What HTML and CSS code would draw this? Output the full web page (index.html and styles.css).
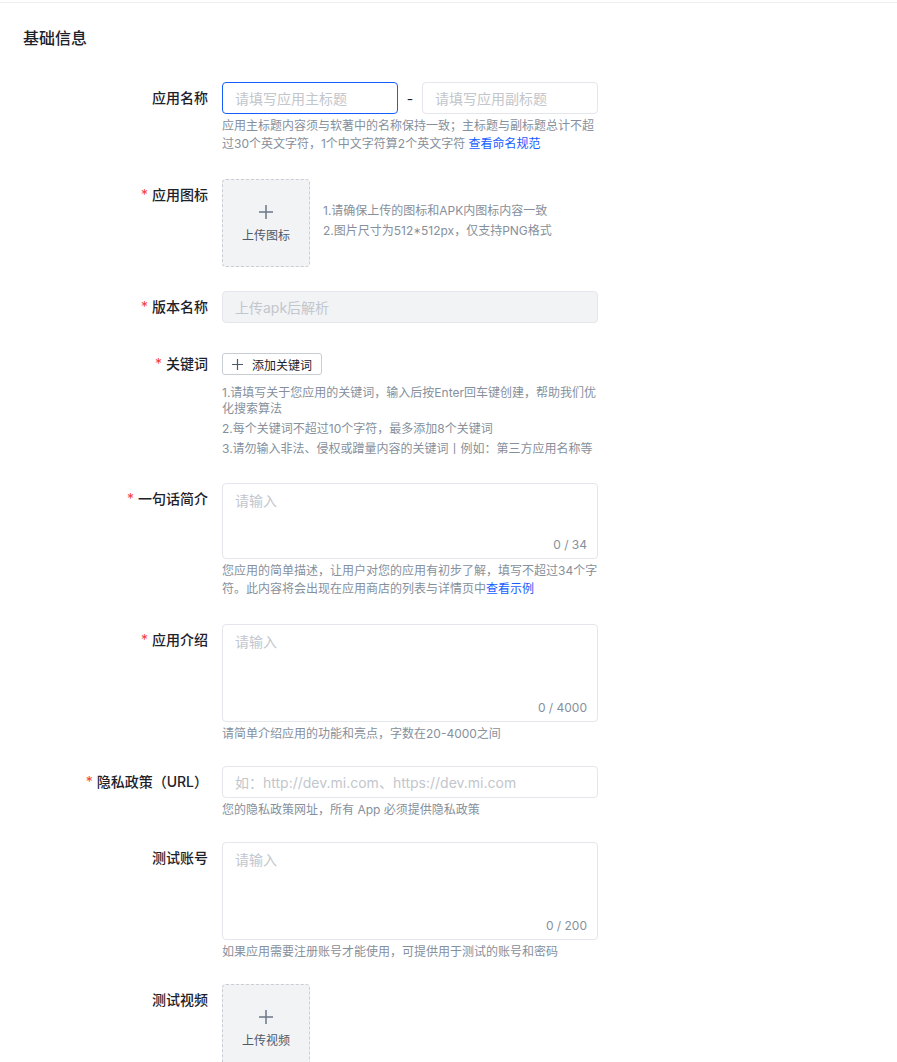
FILE: index.html
```html
<!DOCTYPE html>
<html lang="zh-CN">
<head>
    <meta charset="UTF-8">
    <meta name="viewport" content="width=device-width, initial-scale=1.0">
    <title>基础信息</title>
    <link rel="stylesheet" href="styles.css">
</head>
<body>
    <div class="page">
        <h2 class="section-title">基础信息</h2>

        <div class="form-item gap-lg">
            <label class="form-label">应用名称</label>
            <div class="form-control">
                <div class="title-row">
                    <input class="text-input active" type="text" placeholder="请填写应用主标题">
                    <span class="dash">-</span>
                    <input class="text-input" type="text" placeholder="请填写应用副标题">
                </div>
                <div class="help">应用主标题内容须与软著中的名称保持一致；主标题与副标题总计不超过30个英文字符，1个中文字符算2个英文字符 <a href="#">查看命名规范</a></div>
            </div>
        </div>

        <div class="form-item gap-sm">
            <label class="form-label"><span class="req">*</span>应用图标</label>
            <div class="form-control upload-row">
                <div class="upload-box">
                    <svg class="plus" width="14" height="14" viewBox="0 0 14 14"><path d="M7 0v14M0 7h14" stroke="currentColor" stroke-width="1.5" fill="none"/></svg>
                    <span class="upload-text">上传图标</span>
                </div>
                <div class="upload-tips">
                    <p>1.请确保上传的图标和APK内图标内容一致</p>
                    <p>2.图片尺寸为512*512px，仅支持PNG格式</p>
                </div>
            </div>
        </div>

        <div class="form-item gap-md">
            <label class="form-label"><span class="req">*</span>版本名称</label>
            <div class="form-control">
                <input class="text-input disabled" type="text" placeholder="上传apk后解析" disabled>
            </div>
        </div>

        <div class="form-item gap-lg">
            <label class="form-label"><span class="req">*</span>关键词</label>
            <div class="form-control">
                <div class="tag-row">
                    <button class="add-btn">
                        <svg class="btn-plus" width="11" height="11" viewBox="0 0 11 11"><path d="M5.5 0v11M0 5.5h11" stroke="currentColor" stroke-width="1.2" fill="none"/></svg>
                        添加关键词
                    </button>
                </div>
                <div class="help tight">
                    <p>1.请填写关于您应用的关键词，输入后按Enter回车键创建，帮助我们优化搜索算法</p>
                    <p>2.每个关键词不超过10个字符，最多添加8个关键词</p>
                    <p>3.请勿输入非法、侵权或蹭量内容的关键词丨例如：第三方应用名称等</p>
                </div>
            </div>
        </div>

        <div class="form-item gap-lg">
            <label class="form-label"><span class="req">*</span>一句话简介</label>
            <div class="form-control">
                <div class="textarea-wrap">
                    <textarea class="textarea short" placeholder="请输入"></textarea>
                    <span class="counter">0 / 34</span>
                </div>
                <div class="help">您应用的简单描述，让用户对您的应用有初步了解，填写不超过34个字符。此内容将会出现在应用商店的列表与详情页中<a href="#">查看示例</a></div>
            </div>
        </div>

        <div class="form-item">
            <label class="form-label"><span class="req">*</span>应用介绍</label>
            <div class="form-control">
                <div class="textarea-wrap">
                    <textarea class="textarea" placeholder="请输入"></textarea>
                    <span class="counter">0 / 4000</span>
                </div>
                <div class="help">请简单介绍应用的功能和亮点，字数在20-4000之间</div>
            </div>
        </div>

        <div class="form-item">
            <label class="form-label"><span class="req">*</span>隐私政策（URL）</label>
            <div class="form-control">
                <input class="text-input" type="text" placeholder="如：http://dev.mi.com、https://dev.mi.com">
                <div class="help">您的隐私政策网址，所有 App 必须提供隐私政策</div>
            </div>
        </div>

        <div class="form-item">
            <label class="form-label">测试账号</label>
            <div class="form-control">
                <div class="textarea-wrap">
                    <textarea class="textarea" placeholder="请输入"></textarea>
                    <span class="counter">0 / 200</span>
                </div>
                <div class="help">如果应用需要注册账号才能使用，可提供用于测试的账号和密码</div>
            </div>
        </div>

        <div class="form-item">
            <label class="form-label">测试视频</label>
            <div class="form-control">
                <div class="upload-box">
                    <svg class="plus" width="14" height="14" viewBox="0 0 14 14"><path d="M7 0v14M0 7h14" stroke="currentColor" stroke-width="1.5" fill="none"/></svg>
                    <span class="upload-text">上传视频</span>
                </div>
            </div>
        </div>
    </div>
</body>
</html>
```

FILE: styles.css
```css
body {
    margin: 0;
    font-family: Inter, "Noto Sans CJK SC", sans-serif;
    color: #1d2129;
    background-color: #fff;
}
.page {
    margin-top: 2px;
    border-top: 1px solid #eceef1;
    padding: 0 0 40px 23px;
}
.section-title {
    margin: 23px 0 32px;
    font-size: 16px;
    line-height: 24px;
    font-weight: 500;
}
.form-item {
    display: flex;
    margin-bottom: 23px;
}
.form-item.gap-sm {
    margin-bottom: 24px;
}
.form-item.gap-md {
    margin-bottom: 25px;
}
.form-item.gap-lg {
    margin-bottom: 26px;
}
.form-label {
    width: 185px;
    flex-shrink: 0;
    margin-right: 14px;
    text-align: right;
    font-size: 14px;
    line-height: 32px;
    font-weight: 500;
    color: #1d2129;
}
.req {
    color: #f53f3f;
    margin-right: 4px;
    font-weight: 400;
}
.form-control {
    width: 376px;
}
.title-row {
    display: flex;
    align-items: center;
}
.dash {
    width: 24px;
    text-align: center;
    font-size: 14px;
    color: #1d2129;
}
.text-input {
    width: 100%;
    height: 32px;
    box-sizing: border-box;
    padding: 0 12px;
    border: 1px solid #e5e6eb;
    border-radius: 4px;
    background-color: #fff;
    font-family: inherit;
    font-size: 14px;
    color: #1d2129;
    outline: none;
}
.title-row .text-input {
    width: 176px;
}
.text-input::placeholder,
.textarea::placeholder {
    color: #c2c6cd;
}
.text-input.active {
    border-color: #165dff;
}
.text-input.disabled {
    background-color: #f2f3f5;
}
.help {
    margin-top: 3px;
    font-size: 12px;
    line-height: 18px;
    color: #86909c;
}
.help p {
    margin: 0;
}
.help.tight {
    margin-top: 5px;
    line-height: 16px;
}
.help.tight p + p {
    margin-top: 4px;
}
.help a {
    display: inline-block;
    color: #165dff;
    text-decoration: none;
}
.upload-row {
    display: flex;
    align-items: flex-start;
    gap: 13px;
}
.upload-box {
    width: 88px;
    height: 88px;
    box-sizing: border-box;
    padding-top: 25px;
    border: 1px dashed #c9cdd4;
    border-radius: 4px;
    background-color: #f2f3f5;
    display: flex;
    flex-direction: column;
    align-items: center;
    color: #4e5969;
    flex-shrink: 0;
}
.plus {
    display: block;
    color: #6b7785;
    margin-bottom: 8px;
}
.upload-text {
    font-size: 12px;
    line-height: 18px;
}
.upload-tips {
    margin-top: 22px;
    font-size: 12px;
    line-height: 20px;
    color: #86909c;
    white-space: nowrap;
}
.upload-tips p {
    margin: 0;
}
.tag-row {
    height: 32px;
    display: flex;
    align-items: center;
}
.add-btn {
    width: 100px;
    height: 22px;
    padding: 0;
    border: 1px solid #c9cdd4;
    border-radius: 3px;
    background-color: #fff;
    font-family: inherit;
    font-size: 12px;
    color: #1d2129;
    display: flex;
    align-items: center;
    justify-content: center;
    cursor: pointer;
}
.btn-plus {
    display: block;
    margin-right: 9px;
    color: #4e5969;
}
.textarea-wrap {
    position: relative;
}
.textarea {
    display: block;
    width: 100%;
    height: 98px;
    box-sizing: border-box;
    padding: 6px 12px;
    border: 1px solid #e5e6eb;
    border-radius: 4px;
    font-family: inherit;
    font-size: 14px;
    line-height: 22px;
    color: #1d2129;
    resize: none;
    outline: none;
}
.textarea.short {
    height: 76px;
}
.counter {
    position: absolute;
    right: 11px;
    bottom: 6px;
    font-size: 12px;
    line-height: 16px;
    color: #86909c;
}
```
